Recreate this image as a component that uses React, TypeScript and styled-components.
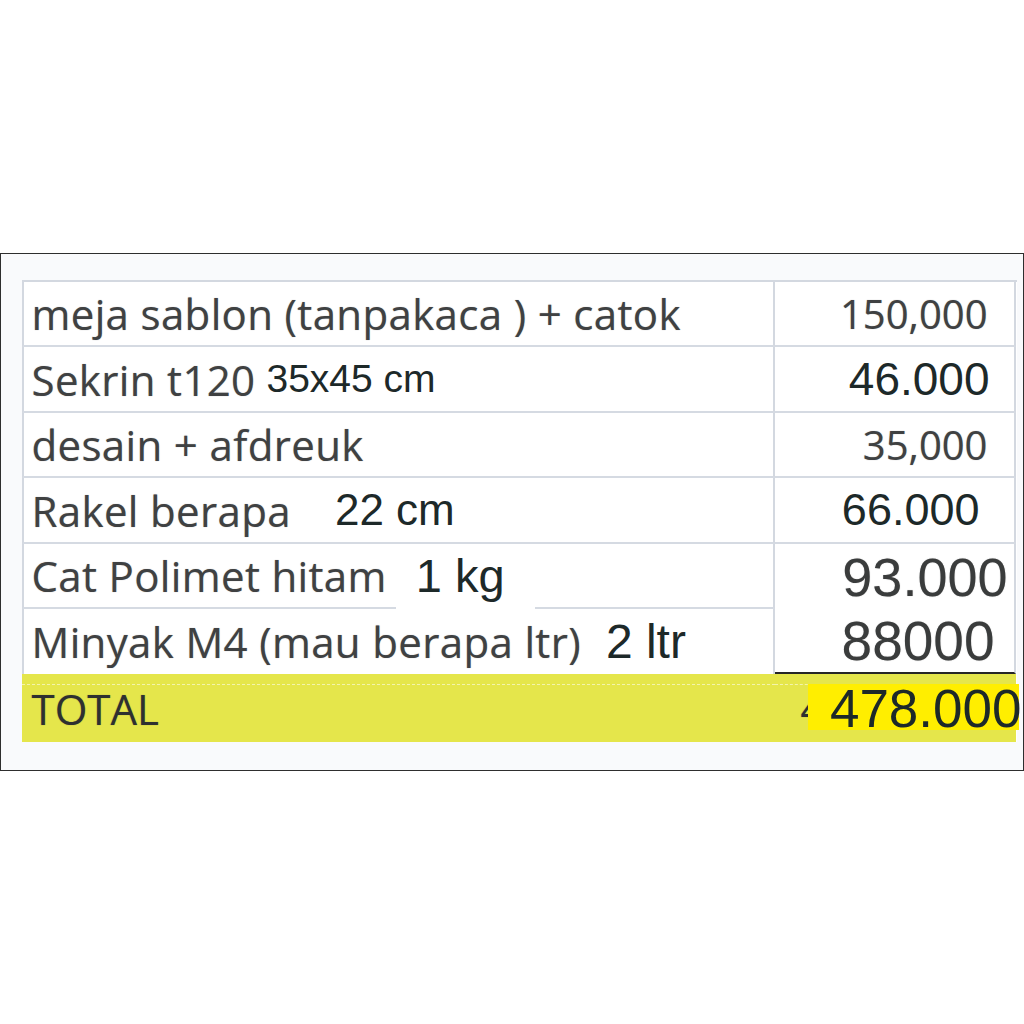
import styled, { createGlobalStyle } from "styled-components";

const GlobalStyle = createGlobalStyle`
  html, body {
    margin: 0;
    background: #ffffff;
  }
`;

const Page = styled.div`
  width: 1024px;
  height: 1024px;
  display: flex;
  align-items: center;
`;

const Frame = styled.div`
  box-sizing: border-box;
  width: 1024px;
  height: 518px;
  border: 1.5px solid #2e2e2e;
  background: #f9fafc;
  padding: 26px 6px 0 20.5px;
`;

const Sheet = styled.div`
  display: grid;
  grid-template-columns: 753px 241px;
  grid-template-rows: 65px 66px 65px 66px 65px 65px 68px;
  border-top: 2px solid #d3d8e0;
  background: #ffffff;
`;

const Label = styled.div<{ $rule?: boolean }>`
  box-sizing: border-box;
  display: flex;
  align-items: center;
  padding-left: 8px;
  border-left: 2px solid #d3d8e0;
  border-right: 2px solid #d3d8e0;
  border-bottom: ${(p) => (p.$rule === false ? "none" : "2px solid #d5dae2")};
  font-family: "Open Sans", Lato, sans-serif;
  font-size: 42px;
  letter-spacing: 0.35px;
  color: #3f4142;
  white-space: nowrap;
  text-shadow: 0 0 1px rgba(50, 50, 50, 0.45);
`;

const Amount = styled.div<{ $pad: number; $rule?: "soft" | "none" | "bold" }>`
  box-sizing: border-box;
  display: flex;
  align-items: center;
  justify-content: flex-end;
  padding-right: ${(p) => p.$pad}px;
  border-right: 2px solid #d3d8e0;
  border-bottom: ${(p) =>
    p.$rule === "none"
      ? "none"
      : p.$rule === "bold"
      ? "2px solid #262626"
      : "2px solid #d5dae2"};
  font-family: "Open Sans", Lato, sans-serif;
  font-size: 40px;
  color: #3f4142;
  white-space: nowrap;
  text-shadow: 0 0 1px rgba(50, 50, 50, 0.45);
`;

const Pasted = styled.span<{ $size: number; $gap?: number; $tone?: "ink" | "grey" }>`
  font-family: "Liberation Sans", Arial, sans-serif;
  font-size: ${(p) => p.$size}px;
  letter-spacing: 0;
  margin-left: ${(p) => p.$gap ?? 0}px;
  color: ${(p) => (p.$tone === "grey" ? "#3a3c3c" : "#1d2929")};
  text-shadow: ${(p) => (p.$tone === "grey" ? "0 0 1px rgba(40,40,40,0.4)" : "none")};
`;

// white paste box that hides the grid line below it
const PastedBox = styled(Pasted)`
  background: #ffffff;
  padding: 0 30px 18px 20px;
  margin-right: -30px;
  margin-bottom: -18px;
  margin-left: ${(p) => (p.$gap ?? 0) - 20}px;
`;

const TotalLabel = styled.div`
  position: relative;
  display: flex;
  align-items: center;
  padding-left: 10px;
  background: #e5e64b;
  font-family: "Open Sans", Lato, sans-serif;
  font-size: 42px;
  color: #2e3030;
  text-shadow: 0 0 1px rgba(40, 40, 40, 0.45);

  &::before {
    content: "";
    position: absolute;
    left: 0;
    right: 0;
    top: 10px;
    border-top: 1px dashed rgba(255, 255, 255, 0.55);
  }
`;

const TotalAmount = styled(TotalLabel)`
  padding-left: 26px;
  font-size: 40px;
`;

const Highlight = styled.div`
  position: absolute;
  left: 33px;
  right: -3px;
  top: 10px;
  height: 46px;
  display: flex;
  justify-content: flex-end;
  background: #ffee00;
  font-family: "Liberation Sans", Arial, sans-serif;
  font-size: 53px;
  line-height: 50px;
  color: #1d2929;
  text-shadow: none;
`;

const HighlightText = styled.span`
  margin-right: -3px;
`;

export default function App() {
  return (
    <>
      <GlobalStyle />
      <Page>
        <Frame>
          <Sheet>
            <Label>meja sablon (tanpakaca ) + catok</Label>
            <Amount $pad={26}>150,000</Amount>

            <Label>
              Sekrin t120
              <Pasted $size={39} $gap={11}>
                35x45 cm
              </Pasted>
            </Label>
            <Amount $pad={24}>
              <Pasted $size={46}>46.000</Pasted>
            </Amount>

            <Label>desain + afdreuk</Label>
            <Amount $pad={26}>35,000</Amount>

            <Label>
              Rakel berapa
              <Pasted $size={44} $gap={44}>
                22 cm
              </Pasted>
            </Label>
            <Amount $pad={34}>
              <Pasted $size={45}>66.000</Pasted>
            </Amount>

            <Label>
              Cat Polimet hitam
              <PastedBox $size={47} $gap={29}>
                1 kg
              </PastedBox>
            </Label>
            <Amount $pad={6} $rule="none">
              <Pasted $size={54} $tone="grey">
                93.000
              </Pasted>
            </Amount>

            <Label $rule={false}>
              Minyak M4 (mau berapa ltr)
              <Pasted $size={48} $gap={25}>
                2 ltr
              </Pasted>
            </Label>
            <Amount $pad={19} $rule="bold">
              <Pasted $size={55} $tone="grey">
                88000
              </Pasted>
            </Amount>

            <TotalLabel>TOTAL</TotalLabel>
            <TotalAmount>
              4
              <Highlight>
                <HighlightText>478.000</HighlightText>
              </Highlight>
            </TotalAmount>
          </Sheet>
        </Frame>
      </Page>
    </>
  );
}
